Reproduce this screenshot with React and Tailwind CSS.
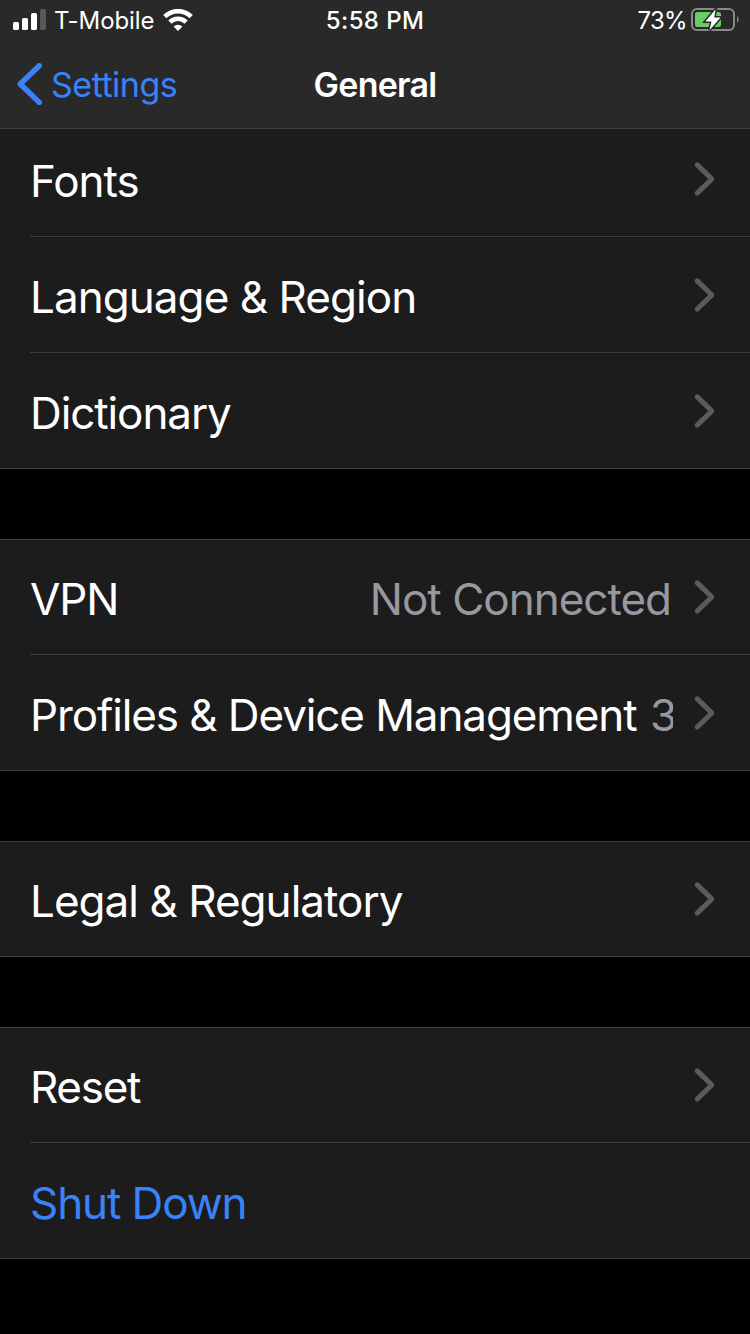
function Chevron() {
  return (
    <svg className="mb-[7px] ml-[21px] h-[34px] w-5 shrink-0" viewBox="0 0 20 34" fill="none" stroke="#5b5b5f" strokeWidth="5.1" strokeLinecap="round" strokeLinejoin="round">
      <path d="M3.3 2.9 17.8 17 3.3 31" />
    </svg>
  );
}

function Row({ label, spacing = "tracking-[-1.1px]", value, valueClass = "", link, first, last, short }) {
  return (
    <div className={`pl-[30px] ${last ? "border-b border-[#3c3c3e]" : ""}`}>
      <div className={`flex items-end pr-[36px] pb-[33px] leading-[44px] ${short ? "h-[107px]" : first ? "h-[114px]" : "h-[115px]"}`}>
        <span className={`whitespace-nowrap ${spacing} ${link ? "text-[#3a82f7]" : "text-white"}`}>{label}</span>
        <span className={`ml-auto whitespace-nowrap text-[#98989f] ${valueClass}`}>{value}</span>
        {!link && <Chevron />}
      </div>
      {!last && <div className="h-px bg-[#3c3c3e]" />}
    </div>
  );
}

function Group({ children, flush }) {
  return <section className={`bg-[#1c1c1d] ${flush ? "" : "mt-[70px] border-t border-[#3c3c3e]"}`}>{children}</section>;
}

function StatusBar() {
  return (
    <div className="grid h-10 grid-cols-3 items-center text-[24px] leading-[38px] text-white">
      <div className="flex items-center pl-[13px]">
        <svg className="mb-px h-[21px] w-[33px]" viewBox="0 0 33 21" fill="#fff">
          <rect x="0" y="13" width="6" height="8" rx="1.6" />
          <rect x="9" y="9" width="6" height="12" rx="1.6" />
          <rect x="18" y="4" width="6" height="17" rx="1.6" />
          <rect x="27" y="0" width="6" height="21" rx="1.6" fill="#58585a" />
        </svg>
        <span className="ml-2 pt-0.5 tracking-[-0.1px] whitespace-nowrap">T-Mobile</span>
        <svg className="ml-[9px] h-[22px] w-[30px] shrink-0" viewBox="0 0 30 22" fill="none" stroke="#fff" strokeWidth="4.6">
          <path d="M1.8 7.7a18.5 18.5 0 0 1 26.4 0" />
          <path d="M6.9 13.2a11.4 11.4 0 0 1 16.2 0" />
          <path d="M15 22l-4.4-4.4a6.2 6.2 0 0 1 8.8 0z" fill="#fff" stroke="none" />
        </svg>
      </div>
      <div className="pt-0.5 text-center font-medium tracking-[0.4px] whitespace-nowrap">5:58 PM</div>
      <div className="flex items-center justify-end pr-[11px]">
        <span className="pt-0.5 tracking-[-0.7px]">73%</span>
        <svg className="ml-[4px] h-6 w-12" viewBox="0 0 48 24" fill="none">
          <rect x="1" y="1" width="42" height="21" rx="5" stroke="#89898b" strokeWidth="2" />
          <path d="M46 8q3.4 3.5 0 7z" fill="#89898b" />
          <rect x="4" y="4" width="26" height="15" rx="2.5" fill="#65ce66" />
          <path d="M24.7 1.2 14.3 13.4h6.2L18.4 22.2 29.6 9.6h-6.4z" fill="#fff" stroke="#292929" strokeWidth="3" paintOrder="stroke" />
        </svg>
      </div>
    </div>
  );
}

export default function App() {
  return (
    <main className="h-[1334px] w-[750px] overflow-hidden bg-black text-[44px] [font-family:Inter,'Liberation_Sans',sans-serif]">
      <header className="h-[129px] border-b border-[#3d3d40] bg-[#292929]">
        <StatusBar />
        <nav className="grid h-[88px] grid-cols-3 items-center text-[34px]">
          <div className="flex items-center pl-[17px] text-[#3a82f7]">
            <svg className="h-[42px] w-[25px]" viewBox="0 0 25 42" fill="none" stroke="currentColor" strokeWidth="5.4" strokeLinecap="round" strokeLinejoin="round">
              <path d="M22.3 2.8 3.2 21l19.1 18.4" />
            </svg>
            <span className="ml-[9px] tracking-[-0.5px]">Settings</span>
          </div>
          <h1 className="text-center font-semibold tracking-[-0.75px] text-white">General</h1>
        </nav>
      </header>
      <Group flush>
        <Row label="Fonts" spacing="tracking-[-1px]" short />
        <Row label="Language &amp; Region" spacing="tracking-[-0.95px]" />
        <Row label="Dictionary" last />
      </Group>
      <Group>
        <Row label="VPN" value="Not Connected" valueClass="pr-[2px] tracking-[-1px]" first />
        <Row label="Profiles &amp; Device Management" value="3" valueClass="w-[23px] overflow-hidden" last />
      </Group>
      <Group>
        <Row label="Legal &amp; Regulatory" spacing="tracking-[-0.97px]" first last />
      </Group>
      <Group>
        <Row label="Reset" spacing="tracking-[-1.3px]" first />
        <Row label="Shut Down" link last />
      </Group>
    </main>
  );
}
